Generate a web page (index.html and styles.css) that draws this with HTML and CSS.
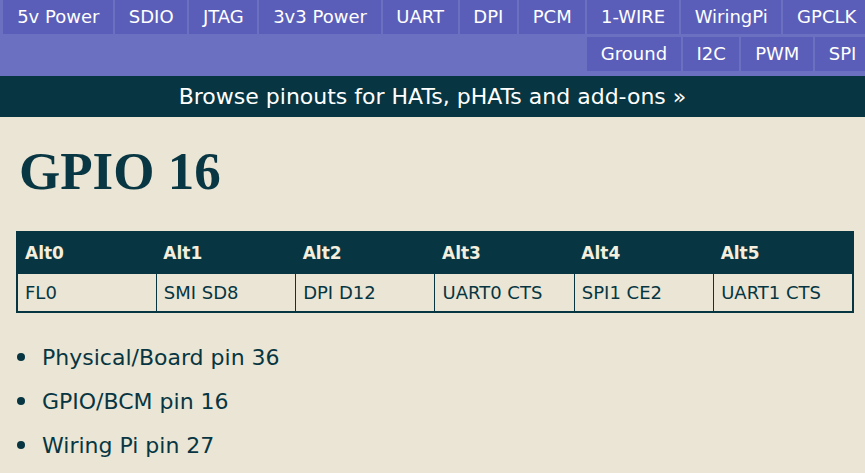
FILE: index.html
```html
<!DOCTYPE html>
<html>
<head>
<meta charset="utf-8">
<link rel="stylesheet" href="styles.css">
</head>
<body>
<nav class="nav">
  <a class="nav-item">5v Power</a>
  <a class="nav-item">SDIO</a>
  <a class="nav-item">JTAG</a>
  <a class="nav-item">3v3 Power</a>
  <a class="nav-item">UART</a>
  <a class="nav-item">DPI</a>
  <a class="nav-item">PCM</a>
  <a class="nav-item">1-WIRE</a>
  <a class="nav-item">WiringPi</a>
  <a class="nav-item">GPCLK</a>
  <a class="nav-item">Ground</a>
  <a class="nav-item">I2C</a>
  <a class="nav-item">PWM</a>
  <a class="nav-item">SPI</a>
</nav>
<div class="banner">Browse pinouts for HATs, pHATs and add-ons »</div>
<main class="content">
  <h1 class="title">GPIO 16</h1>
  <table class="alts">
    <thead>
      <tr><th>Alt0</th><th>Alt1</th><th>Alt2</th><th>Alt3</th><th>Alt4</th><th>Alt5</th></tr>
    </thead>
    <tbody>
      <tr><td>FL0</td><td>SMI SD8</td><td>DPI D12</td><td>UART0 CTS</td><td>SPI1 CE2</td><td>UART1 CTS</td></tr>
    </tbody>
  </table>
  <ul class="pins">
    <li class="pin">Physical/Board pin 36</li>
    <li class="pin">GPIO/BCM pin 16</li>
    <li class="pin">Wiring Pi pin 27</li>
  </ul>
</main>
</body>
</html>
```

FILE: styles.css
```css
html, body {
  margin: 0;
  padding: 0;
}
body {
  background: #eae5d4;
  font-family: "DejaVu Sans", "Noto Sans", sans-serif;
  color: #073642;
  overflow: hidden;
}
.nav {
  display: flex;
  flex-wrap: wrap;
  justify-content: flex-end;
  align-content: flex-start;
  column-gap: 2px;
  row-gap: 3px;
  background: #6b70c1;
  padding: 0 0 0 2px;
  margin-right: -5px;
  box-sizing: border-box;
  height: 76px;
}
.nav-item {
  display: block;
  background: #5a5eb9;
  color: #ffffff;
  font-size: 18px;
  height: 34px;
  line-height: 34px;
  padding: 0 13.7px;
  white-space: nowrap;
}
.banner {
  background: #073642;
  color: #ffffff;
  height: 41px;
  line-height: 41px;
  text-align: center;
  font-size: 22px;
}
.content {
  padding: 0 16px;
}
.title {
  font-family: "Liberation Serif", "Times New Roman", serif;
  font-weight: bold;
  font-size: 53px;
  line-height: 64px;
  margin: 22px 0 0 3px;
  color: #083642;
}
.alts {
  width: 838px;
  margin-top: 28px;
  border-collapse: collapse;
  border: 2px solid #073642;
  table-layout: fixed;
}
.alts th {
  background: #073642;
  color: #f3eedd;
  text-align: left;
  font-size: 17px;
  font-weight: bold;
  height: 40px;
  padding: 0 7px;
}
.alts td {
  border: 1px solid #073642;
  font-size: 18px;
  height: 37px;
  padding: 0 7px;
}
.pins {
  list-style: none;
  margin: 22px 0 0;
  padding: 0;
  font-size: 22px;
}
.pin {
  display: flex;
  align-items: center;
  height: 44px;
}
.pin::before {
  content: "";
  width: 8px;
  height: 8px;
  border-radius: 50%;
  background: #073642;
  margin: 0 17px 0 1px;
}
```
